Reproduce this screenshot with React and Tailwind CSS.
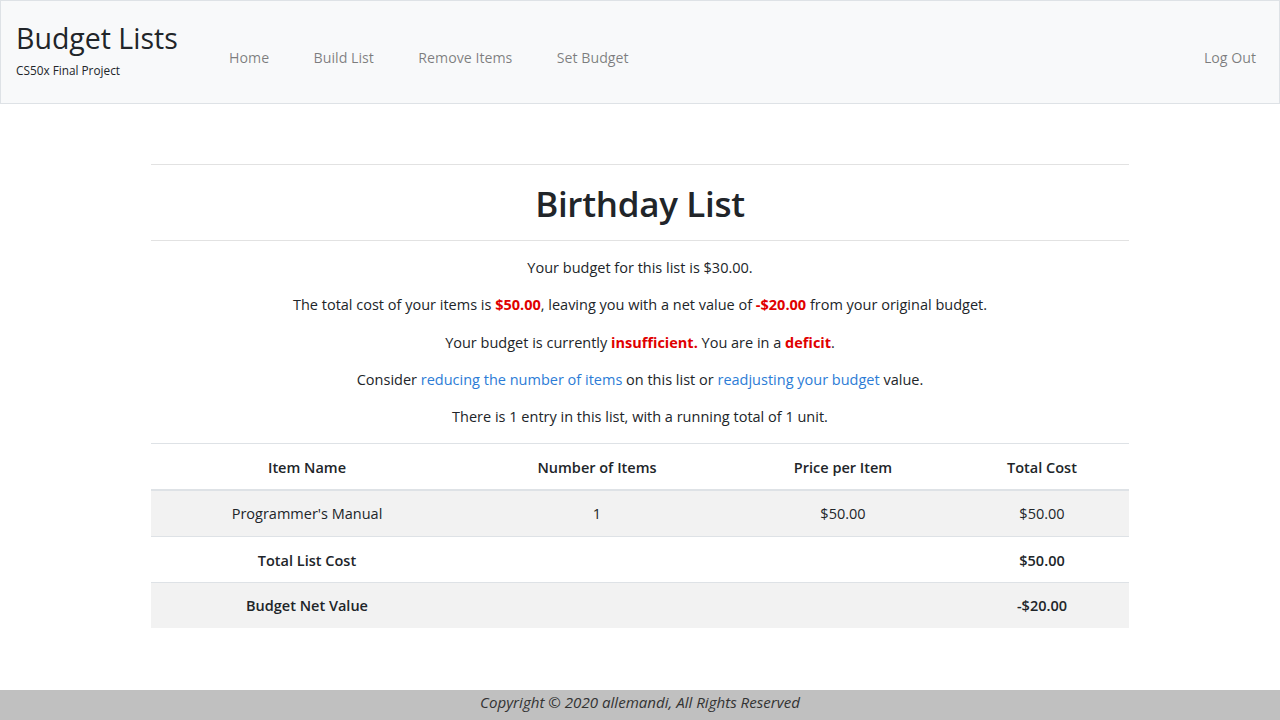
const navLinks = ['Home', 'Build List', 'Remove Items', 'Set Budget'];

const App = () => {
    return (
        <div className="min-h-[720px] flex flex-col bg-white text-[#212529] font-['Open_Sans',sans-serif]">
            {/* navbar */}
            <nav className="h-[104px] bg-[#f8f9fa] border border-[#dee2e6] flex items-center px-4">
                <div className="w-[212px]">
                    <div className="text-[28.5px] leading-none -ml-[1px]">Budget Lists</div>
                    <div className="text-[11.8px] mt-[9px] -ml-[1px]">CS50x Final Project</div>
                </div>
                <ul className="flex items-center gap-[44.5px] mt-[12px] text-[14.2px] text-black/50">
                    {navLinks.map((title) => (
                        <li key={title}>
                            <a href="#">{title}</a>
                        </li>
                    ))}
                </ul>
                <a href="#" className="ml-auto mr-[7px] mt-[12px] text-[14.2px] text-black/50">
                    Log Out
                </a>
            </nav>

            {/* main */}
            <main className="flex-1 w-[978px] mx-auto pt-[60px]">
                <div className="border-y border-[#e2e2e2] h-[77px] flex items-center justify-center">
                    <h1 className="text-[35px] font-semibold tracking-[-0.3px] text-[#212529] mt-[4px]">Birthday List</h1>
                </div>
                <div className="text-center text-[14.5px] leading-[21px] pt-[16px] space-y-[16.25px]">
                    <p>Your budget for this list is $30.00.</p>
                    <p>
                        The total cost of your items is <b className="text-[#e00000]">$50.00</b>, leaving you with a net
                        value of <b className="text-[#e00000]">-$20.00</b> from your original budget.
                    </p>
                    <p>
                        Your budget is currently <b className="text-[#e00000]">insufficient.</b> You are in a{' '}
                        <b className="text-[#e00000]">deficit</b>.
                    </p>
                    <p>
                        Consider <a href="#" className="text-[#2c7cd6]">reducing the number of items</a> on this list or{' '}
                        <a href="#" className="text-[#2c7cd6]">readjusting your budget</a> value.
                    </p>
                    <p>There is 1 entry in this list, with a running total of 1 unit.</p>
                </div>

                <table className="w-full mt-[16px] text-[14.5px] text-center border-collapse">
                    <thead>
                        <tr className="border-t border-[#dee2e6] border-b-2 h-[46px]">
                            <th className="w-[312px] font-semibold pt-[3px]">Item Name</th>
                            <th className="w-[268px] font-semibold pt-[3px]">Number of Items</th>
                            <th className="w-[224px] font-semibold pt-[3px]">Price per Item</th>
                            <th className="font-semibold pt-[3px]">Total Cost</th>
                        </tr>
                    </thead>
                    <tbody>
                        <tr className="bg-[#f2f2f2] h-[47px] border-b border-[#dee2e6] [&>td]:pt-[2px]">
                            <td>Programmer's Manual</td>
                            <td>1</td>
                            <td>$50.00</td>
                            <td>$50.00</td>
                        </tr>
                        <tr className="h-[46px] border-b border-[#dee2e6] font-semibold [&>td]:pt-[2px]">
                            <td>Total List Cost</td>
                            <td></td>
                            <td></td>
                            <td>$50.00</td>
                        </tr>
                        <tr className="bg-[#f2f2f2] h-[45px] font-semibold [&>td]:pt-[2px]">
                            <td>Budget Net Value</td>
                            <td></td>
                            <td></td>
                            <td>-$20.00</td>
                        </tr>
                    </tbody>
                </table>
            </main>

            {/* footer */}
            <footer className="h-[30px] bg-[#c0c0c0] flex items-center justify-center italic text-[15.1px] text-[#333] pb-[6px]">
                Copyright © 2020 allemandi, All Rights Reserved
            </footer>
        </div>
    );
};

export default App;
